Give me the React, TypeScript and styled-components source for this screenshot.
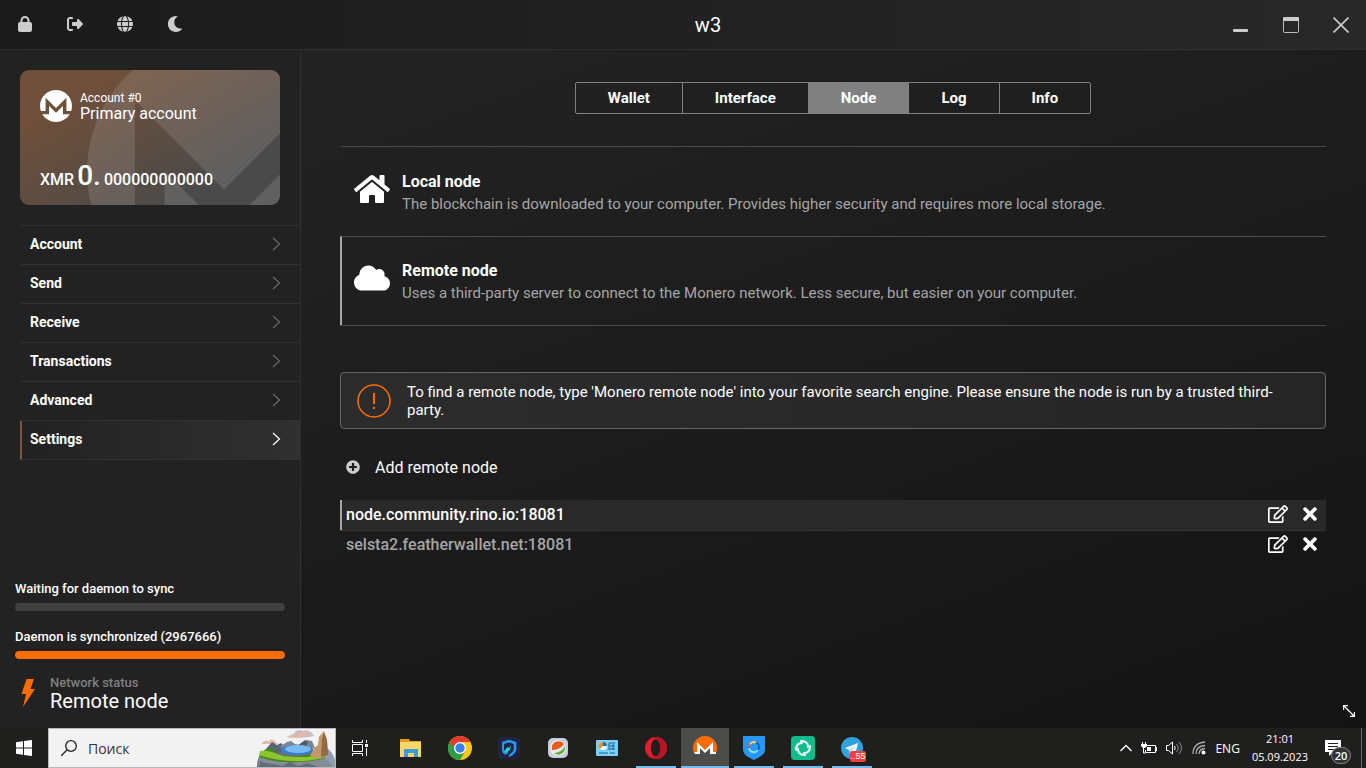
import React from 'react'
import styled, { createGlobalStyle } from 'styled-components'
import { FaHome, FaCloud, FaRegEdit, FaTimes, FaPlusCircle, FaMoon } from 'react-icons/fa'
import { FaLock, FaRightFromBracket, FaGlobe } from 'react-icons/fa6'

const GlobalStyle = createGlobalStyle`
  * {
    box-sizing: border-box;
  }
  body {
    margin: 0;
    background: #171717;
    color: #ffffff;
    font-family: Roboto, "Liberation Sans", sans-serif;
  }
  button {
    background: none;
    border: none;
    padding: 0;
    margin: 0;
    color: inherit;
    font: inherit;
    cursor: pointer;
  }
  svg {
    display: block;
    flex-shrink: 0;
  }
`

const Desktop = styled.div`
  height: 100vh;
  display: flex;
  flex-direction: column;
  overflow: hidden;
`

const TitleBar = styled.header`
  height: 50px;
  flex-shrink: 0;
  display: grid;
  grid-template-columns: 1fr auto 1fr;
  align-items: center;
  background: linear-gradient(to right, #1a1a1a, #282828);
  border-bottom: 1px solid #303030;
  color: #cccccc;
`

const TitleGroup = styled.div<{ $end?: boolean }>`
  display: flex;
  justify-content: ${(p) => (p.$end ? 'flex-end' : 'flex-start')};
  padding-bottom: ${(p) => (p.$end ? '0' : '2px')};
`

const TitleButton = styled.button`
  width: 50px;
  height: 48px;
  display: flex;
  align-items: center;
  justify-content: center;
`

const Title = styled.h1`
  margin: 0;
  font-size: 20px;
  font-weight: 400;
  color: #ffffff;
  padding-left: 50px;
`

const Window = styled.div`
  position: relative;
  flex: 1;
  min-height: 0;
  display: flex;
`

const Sidebar = styled.aside`
  width: 301px;
  flex-shrink: 0;
  display: flex;
  flex-direction: column;
  justify-content: space-between;
  background: #222222;
  border-right: 1px solid #303030;
`

const Card = styled.section`
  position: relative;
  overflow: hidden;
  height: 135px;
  margin: 20px;
  padding: 20px 20px 9px;
  border-radius: 9px;
  display: flex;
  flex-direction: column;
  justify-content: space-between;
  background: linear-gradient(150deg, #6f4f39 20%, #4a4a4a 80%);
`

const Watermark = styled.svg`
  position: absolute;
  left: 67px;
  top: -35px;
  fill: rgba(255, 255, 255, 0.12);
`

const CardHead = styled.div`
  position: relative;
  display: flex;
  gap: 8px;
`

const AccountNumber = styled.div`
  font-size: 12px;
  line-height: 16px;
`

const AccountName = styled.div`
  font-size: 16px;
  line-height: 16px;
`

const Balance = styled.div`
  position: relative;
  display: flex;
  align-items: baseline;
  gap: 3px;
  font-size: 16px;
  line-height: 32px;
  font-weight: 500;
`

const BalanceWhole = styled.span`
  font-size: 28px;
`

const Nav = styled.nav`
  margin-left: 20px;
  border-top: 1px solid #313131;
`

const NavLink = styled.a<{ $active?: boolean }>`
  height: 39px;
  display: flex;
  align-items: center;
  justify-content: space-between;
  padding: 0 19px 2px 8px;
  border-left: 2px solid ${(p) => (p.$active ? '#7a5643' : 'transparent')};
  border-bottom: 1px solid #313131;
  background: ${(p) => (p.$active ? 'linear-gradient(to right, #222222, #303030)' : 'none')};
  color: #ffffff;
  font-size: 14px;
  font-weight: 700;
  text-decoration: none;

  svg {
    stroke: ${(p) => (p.$active ? '#ffffff' : '#6a6a6a')};
  }
`

const Status = styled.div`
  padding: 0 15px 17px;
`

const SyncLabel = styled.div`
  font-size: 13px;
  line-height: 16px;
  font-weight: 500;
`

const Track = styled.div`
  height: 8px;
  margin: 6px 0 18px;
  border-radius: 4px;
  background: #404040;
  overflow: hidden;
`

const Fill = styled.div`
  height: 100%;
  border-radius: 4px;
  background: #ff6c00;
`

const Network = styled.div`
  display: flex;
  align-items: center;
  gap: 14px;
  padding-left: 6px;
  margin-top: -2px;
`

const NetworkLabel = styled.div`
  color: #808080;
  font-size: 13px;
  line-height: 16px;
  font-weight: 500;
`

const NetworkValue = styled.div`
  font-size: 20px;
  line-height: 20px;
`

const Main = styled.main`
  flex: 1;
  min-width: 0;
  padding: 32px 40px 0 39px;
  background: linear-gradient(160deg, #232323 0%, #141414 100%);
`

const Tabs = styled.div`
  width: fit-content;
  height: 32px;
  margin: 0 auto 32px;
  display: flex;
  border: 1px solid #808080;
  border-radius: 2px;
`

const Tab = styled.button<{ $active?: boolean }>`
  padding: 0 32px;
  font-size: 15px;
  font-weight: 700;
  background: ${(p) => (p.$active ? '#808080' : 'none')};

  & + & {
    border-left: 1px solid #808080;
  }
`

const NodeOption = styled.button<{ $active?: boolean }>`
  width: 100%;
  height: 90px;
  display: flex;
  align-items: center;
  gap: 12px;
  padding: 2px 0 0 12px;
  border-top: 1px solid #4a4a4a;
  border-left: 2px solid ${(p) => (p.$active ? '#a8a8a8' : 'transparent')};
  text-align: left;

  &:last-child {
    height: 89px;
  }
  svg {
    margin-bottom: 8px;
  }
`

const NodeOptions = styled.section`
  border-bottom: 1px solid #4a4a4a;
  margin-bottom: 46px;
`

const OptionTitle = styled.div`
  font-size: 16px;
  line-height: 22px;
  font-weight: 700;
`

const OptionText = styled.div`
  color: #a5a5a5;
  font-size: 15px;
  line-height: 22px;
`

const Notice = styled.div`
  display: flex;
  align-items: center;
  gap: 16px;
  padding: 10px 16px 9px;
  border: 1px solid #666666;
  border-radius: 4px;
  background: linear-gradient(to right, #2c2c2c, #252525);
  font-size: 15px;
  line-height: 18px;
`

const NoticeText = styled.p`
  margin: 0;
`

const AddNode = styled.button`
  display: flex;
  align-items: center;
  gap: 15px;
  height: 30px;
  margin: 23px 0 18px;
  padding-left: 6px;
  font-size: 16px;

  svg {
    color: #cccccc;
  }
`

const NodeList = styled.ul`
  list-style: none;
  margin: 0;
  padding: 0;
`

const NodeItem = styled.li<{ $active?: boolean }>`
  height: 30px;
  display: flex;
  align-items: center;
  justify-content: space-between;
  padding: 0 6px 2px 4px;
  border-left: 2px solid ${(p) => (p.$active ? '#a8a8a8' : 'transparent')};
  background: ${(p) => (p.$active ? '#292929' : 'none')};
  box-shadow: ${(p) => (p.$active ? '0 1px #333333' : 'none')};
  color: ${(p) => (p.$active ? '#ffffff' : '#a5a5a5')};
  font-size: 16px;
  font-weight: 500;
`

const NodeActions = styled.div`
  display: flex;
  align-items: center;
  gap: 12px;
  color: #ffffff;
`

const ResizeGrip = styled.div`
  position: absolute;
  right: 11px;
  bottom: 11px;
`

const Taskbar = styled.footer`
  height: 40px;
  flex-shrink: 0;
  display: flex;
  background: #1f201e;
  font-family: "Open Sans", "Noto Sans", sans-serif;
`

const TaskCell = styled.button<{ $open?: boolean; $active?: boolean }>`
  width: 48px;
  display: flex;
  align-items: center;
  justify-content: center;
  background: ${(p) => {
    if (p.$active) return 'linear-gradient(#76b9ed, #76b9ed) center bottom / 48px 2px no-repeat #4c4c4b'
    return p.$open ? 'linear-gradient(#76b9ed, #76b9ed) center bottom / 40px 2px no-repeat' : 'none'
  }};
`

const SearchBox = styled.label`
  width: 288px;
  display: flex;
  align-items: center;
  padding-left: 12px;
  background: #f2f2f2;
  border: 1px solid #b8b8b8;
  overflow: hidden;
`

const SearchInput = styled.input`
  flex: 1;
  min-width: 0;
  margin-left: 11px;
  padding: 0;
  border: none;
  outline: none;
  background: none;
  font-family: inherit;
  font-size: 14px;

  &::placeholder {
    color: #333333;
    opacity: 1;
  }
`

const Apps = styled.div`
  display: flex;
  gap: 1px;
  margin-left: 3px;
`

const Tray = styled.div`
  display: flex;
  align-items: center;
  margin-left: auto;
  font-size: 12px;
`

const TrayIcons = styled.div`
  display: flex;
  align-items: center;
  gap: 9px;
  margin-right: 9px;
`

const Clock = styled.time`
  margin: 0 17px 0 12px;
  font-size: 11px;
  line-height: 18px;
  text-align: center;
`

const ShowDesktop = styled.div`
  width: 5px;
  height: 40px;
  margin-left: 8px;
  border-left: 1px solid #6b6b6b;
`

const MONERO =
  'M12 0C5.365 0 0 5.373 0 12.015c0 1.335.228 2.607.618 3.81h3.577V5.729L12 13.545l7.805-7.815v10.095h3.577c.389-1.203.618-2.475.618-3.81C24 5.375 18.635 0 12 0zm-1.788 15.307l-3.417-3.421v6.351H1.758C3.87 21.689 7.678 24 12 24s8.162-2.311 10.245-5.764h-5.04v-6.351l-3.386 3.421-1.788 1.79-1.814-1.79h-.005z'

const navItems = ['Account', 'Send', 'Receive', 'Transactions', 'Advanced', 'Settings']
const tabs = ['Wallet', 'Interface', 'Node', 'Log', 'Info']
const nodes = ['node.community.rino.io:18081', 'selsta2.featherwallet.net:18081']

const Chevron = () => (
  <svg width="9" height="14" viewBox="0 0 9 14" fill="none" strokeWidth="1.2">
    <path d="M1 1l6.500 6L1 13" />
  </svg>
)

const Progress = ({ label, value }: { label: string; value: number }) => (
  <>
    <SyncLabel>{label}</SyncLabel>
    <Track role="progressbar" aria-label={label} aria-valuenow={value}>
      <Fill style={{ width: `${value}%` }} />
    </Track>
  </>
)

const Landscape = () => (
  <svg width="78" height="38" viewBox="0 0 78 38">
    <path d="M5 14c2-3 5-3 7-2 2-3 5-1 7 1l2 2H5z" fill="#e0bcae" />
    <path d="M30 8c3-1 4-3 7-3 1-4 6-5 9-3 4-2 7 0 9 2l2 3c-9 2-18 2-27 1z" fill="#c4bccb" />
    <path d="M30 8c4-3 7-1 10-3 3-1 4-3 7-2 4 0 5 2 4 4-6 2-14 2-21 1z" fill="#e0b9a8" />
    <path d="M62 38V16c7 0 14 7 16 15v7z" fill="#8f9db2" />
    <path d="M0 38c0-10 4-16 13-20h42l8 20z" fill="#64717d" />
    <path d="M9 20l6-7 5 3 4-2 6 6-9 4z" fill="#59656f" />
    <path d="M22 18l8-5 4-1 4 3 5 1 7-5 5 1 3 7-10 2-20-2z" fill="#7c8791" />
    <path d="M40 17l8-6 3 2-2 5z" fill="#505d67" />
    <ellipse cx="40" cy="21" rx="16" ry="5" fill="#347fd0" />
    <ellipse cx="41" cy="20" rx="13" ry="4" fill="#78baf0" />
    <path d="M3 25c3-2 5-5 10-6 5 2 4 6 13 8 12 1 22 0 34-3l9 5c-16 8-48 7-67 0z" fill="#3f8a20" />
    <path d="M3 22c9-1 14 2 23 5 14 2 28 1 42-1l-2 3c-18 5-44 4-64-3z" fill="#8ec52e" />
    <path d="M1 38l1-10c18 7 46 7 66 1l8 9z" fill="#858c98" />
    <path d="M2 38l1-6c8 4 14 2 22 5l8-4 8 4 10-3 10 4z" fill="#626b78" />
    <path d="M53 27l4-8 4-3 1-8 5-6 3 9 1 16c-5 2-12 3-18 0z" fill="#c3986a" />
    <path d="M64 28l1-18 2-7 3 8 1 15z" fill="#916943" />
  </svg>
)

const apps: { name: string; open?: boolean; active?: boolean; icon: React.ReactNode }[] = [
  {
    name: 'Explorer',
    icon: (
      <svg width="24" height="24" viewBox="0 0 24 24">
        <path d="M1 3h9l1 2h11v5H1z" fill="#e0a010" />
        <path d="M1 6h21v15H1z" fill="#fbd668" />
        <path d="M5 21v-8h14v8h-4v-4H9v4z" fill="#3c9ade" />
      </svg>
    ),
  },
  {
    name: 'Chrome',
    icon: (
      <svg width="24" height="24" viewBox="0 0 24 24">
        <circle cx="12" cy="12" r="12" fill="#fbc916" />
        <path d="M12 12L1.600 6A12 12 0 0 0 12 24l5.200-9z" fill="#2f9e4b" />
        <path d="M12 12H6.800L1.600 6A12 12 0 0 1 22.400 6H12z" fill="#e33b2e" />
        <circle cx="12" cy="12" r="6" fill="#ffffff" />
        <circle cx="12" cy="12" r="4.700" fill="#3b7ded" />
      </svg>
    ),
  },
  {
    name: 'Protection',
    icon: (
      <svg width="24" height="24" viewBox="0 0 24 24">
        <rect x="1" y="1" width="22" height="22" rx="4" fill="#202442" />
        <path d="M6 7l6-2 6 2v6c0 3-2 5-6 7" fill="none" stroke="#2398ff" strokeWidth="2.500" />
        <path d="M6 6v7c0 2 1 4 3 5" fill="none" stroke="#2398ff" strokeWidth="2" />
        <path d="M14 9l-1 5-2 1-1 4-1-3-3 1 3-4 1-2 2 1z" fill="#19d8e2" />
      </svg>
    ),
  },
  {
    name: 'Trading',
    icon: (
      <svg width="22" height="22" viewBox="0 0 22 22">
        <rect x="1" y="1" width="20" height="20" rx="5" fill="#c5ccdb" />
        <circle cx="11" cy="11" r="8" fill="#e9ebf0" />
        <path d="M5 13C3 4 14 2 17 7c-3 4-7 6-12 6z" fill="#e65b1c" />
        <path d="M7 16c5 0 9-3 11-7 1 7-6 11-11 7z" fill="#63a83a" />
      </svg>
    ),
  },
  {
    name: 'System monitor',
    icon: (
      <svg width="22" height="18" viewBox="0 0 22 18">
        <rect width="22" height="16" y="1" rx="1" fill="#7bd0f7" />
        <circle cx="7" cy="7" r="4" fill="#ffffff" />
        <path d="M7 7V3a4 4 0 0 0-3 7z" fill="#e8902d" />
        <path d="M7 7V3a4 4 0 0 1 4 4z" fill="#246ca8" />
        <path d="M13 4h6M13 7h6M13 10h6M13 4v7M17 5v6M3 14h9M14 14h5" stroke="#18649c" />
      </svg>
    ),
  },
  {
    name: 'Opera',
    open: true,
    icon: (
      <svg width="24" height="24" viewBox="0 0 24 24">
        <path fillRule="evenodd" d="M12 1a11 11 0 1 0 0 22 11 11 0 1 0 0-22m0 3c6 0 6 16 0 16s-6-16 0-16z" fill="#e91b2d" />
        <path d="M12 1a11 11 0 0 1 0 22c-2 0-3-1-4-2 10 2 12-16 1-19z" fill="#b81624" />
        <ellipse cx="11.500" cy="12" rx="4.500" ry="8.500" fill="#1f201e" />
      </svg>
    ),
  },
  {
    name: 'Monero',
    open: true,
    active: true,
    icon: (
      <svg width="24" height="24" viewBox="0 0 24 24">
        <path d="M12 0A12 12 0 0 0 1 17h3V6l8 8 8-8v11h3A12 12 0 0 0 12 0z" fill="#ff6c00" />
        <path d="M2 18h5v-6l5 5 5-5v6h6v-2h-3V6l-8 8-8-8v10H1z" fill="#ffffff" />
      </svg>
    ),
  },
  {
    name: 'Shield',
    open: true,
    icon: (
      <svg width="24" height="24" viewBox="0 0 24 24">
        <path d="M1 0h22v13c0 6-5 8-11 11C6 21 1 19 1 13z" fill="#2798f3" />
        <g fill="none" strokeWidth="2">
          <circle cx="12" cy="11" r="5" stroke="#175dbd" />
          <path d="M7.700 8.500A5 5 0 0 1 14 6.500" stroke="#f5d267" />
          <path d="M7 11a5 5 0 0 1 1-3" stroke="#ed665e" />
          <path d="M16 14a5 5 0 0 1-9-2" stroke="#8be2f6" />
        </g>
      </svg>
    ),
  },
  {
    name: 'Element',
    open: true,
    icon: (
      <svg width="24" height="24" viewBox="0 0 24 24">
        <rect width="24" height="24" rx="4" fill="#0dbd8b" />
        <g fill="none" stroke="#ffffff" strokeWidth="2" strokeLinecap="round">
          <path d="M10 5c4 0 7 2 7 6" />
          <path d="M19 10c0 4-2 7-6 7" />
          <path d="M14 19c-4 0-7-2-7-6" />
          <path d="M5 14c0-4 2-7 6-7" />
        </g>
      </svg>
    ),
  },
]

const TelegramIcon = styled.span`
  position: relative;
`

const TelegramBadge = styled.span`
  position: absolute;
  left: 9px;
  top: 14px;
  width: 16px;
  height: 11px;
  border-radius: 2px;
  background: #ef3e3e;
  font-size: 9px;
  line-height: 11px;
  font-family: "Liberation Sans", sans-serif;
`

const NoticeBell = styled.div`
  position: relative;
  width: 28px;
  height: 16px;
`

const NoticeCount = styled.span`
  position: absolute;
  left: 6px;
  top: 7px;
  width: 20px;
  height: 17px;
  border: 1px solid #888888;
  border-radius: 9px;
  background: #333333;
  font-size: 11px;
  font-weight: 600;
  line-height: 15px;
  text-align: center;
`

const App = () => {
  return (
    <Desktop>
      <GlobalStyle />
      <TitleBar>
        <TitleGroup>
          <TitleButton aria-label="Lock"><FaLock size={16} /></TitleButton>
          <TitleButton aria-label="Close wallet"><FaRightFromBracket size={16} /></TitleButton>
          <TitleButton aria-label="Language"><FaGlobe size={16} /></TitleButton>
          <TitleButton aria-label="Theme"><FaMoon size={16} /></TitleButton>
        </TitleGroup>
        <Title>w3</Title>
        <TitleGroup $end>
          <TitleButton aria-label="Minimize">
            <svg width="16" height="16"><rect x="0" y="12" width="15" height="3" rx="1" fill="#cccccc" /></svg>
          </TitleButton>
          <TitleButton aria-label="Maximize">
            <svg width="16" height="16">
              <rect x="0.500" y="0.500" width="15" height="15" rx="1" fill="none" stroke="#bbbbbb" />
              <rect width="16" height="4" rx="1" fill="#cccccc" />
            </svg>
          </TitleButton>
          <TitleButton aria-label="Close">
            <svg width="16" height="16"><path d="M0.500 0.500l15 15M15.500 0.500l-15 15" stroke="#cccccc" strokeWidth="1.600" /></svg>
          </TitleButton>
        </TitleGroup>
      </TitleBar>

      <Window>
        <Sidebar>
          <div>
            <Card>
              <Watermark width="274" height="274" viewBox="0 0 24 24"><path d={MONERO} /></Watermark>
              <CardHead>
                <svg width="32" height="32" viewBox="0 0 24 24" fill="#ffffff"><path d={MONERO} /></svg>
                <div>
                  <AccountNumber>Account #0</AccountNumber>
                  <AccountName>Primary account</AccountName>
                </div>
              </CardHead>
              <Balance>
                <span>XMR</span>
                <BalanceWhole>0.</BalanceWhole>
                <span>000000000000</span>
              </Balance>
            </Card>
            <Nav>
              {navItems.map((item) => (
                <NavLink key={item} href={`#${item.toLowerCase()}`} $active={item === 'Settings'}>
                  {item}
                  <Chevron />
                </NavLink>
              ))}
            </Nav>
          </div>
          <Status>
            <Progress label="Waiting for daemon to sync" value={0} />
            <Progress label="Daemon is synchronized (2967666)" value={100} />
            <Network>
              <svg width="15" height="28" viewBox="0 0 15 28" fill="#ff6c00">
                <path d="M5.500 0H13L9.500 10H14L2 28l3-13H0.500z" />
              </svg>
              <div>
                <NetworkLabel>Network status</NetworkLabel>
                <NetworkValue>Remote node</NetworkValue>
              </div>
            </Network>
          </Status>
        </Sidebar>

        <Main>
          <Tabs role="tablist">
            {tabs.map((tab) => (
              <Tab key={tab} role="tab" aria-selected={tab === 'Node'} $active={tab === 'Node'}>{tab}</Tab>
            ))}
          </Tabs>
          <NodeOptions>
            <NodeOption>
              <FaHome size={36} />
              <div>
                <OptionTitle>Local node</OptionTitle>
                <OptionText>The blockchain is downloaded to your computer. Provides higher security and requires more local storage.</OptionText>
              </div>
            </NodeOption>
            <NodeOption $active>
              <FaCloud size={36} />
              <div>
                <OptionTitle>Remote node</OptionTitle>
                <OptionText>Uses a third-party server to connect to the Monero network. Less secure, but easier on your computer.</OptionText>
              </div>
            </NodeOption>
          </NodeOptions>
          <Notice>
            <svg width="34" height="34" viewBox="0 0 34 34" fill="none" stroke="#ff6c00">
              <circle cx="17" cy="17" r="16" strokeWidth="1.500" />
              <path d="M17 9v11M17 23v2" strokeWidth="2" />
            </svg>
            <NoticeText>
              To find a remote node, type 'Monero remote node' into your favorite search engine. Please ensure the node is run by a trusted third-party.
            </NoticeText>
          </Notice>
          <AddNode>
            <FaPlusCircle size={14} />
            Add remote node
          </AddNode>
          <NodeList>
            {nodes.map((node, i) => (
              <NodeItem key={node} $active={i === 0}>
                {node}
                <NodeActions>
                  <button aria-label="Edit node"><FaRegEdit size={20} /></button>
                  <button aria-label="Remove node"><FaTimes size={20} /></button>
                </NodeActions>
              </NodeItem>
            ))}
          </NodeList>
        </Main>
        <ResizeGrip>
          <svg width="12" height="12" viewBox="0 0 12 12" fill="none" stroke="#ffffff" strokeWidth="1.300">
            <path d="M1 1l10 10M0.500 5V0.500H5M7 11.500h4.500V7" />
          </svg>
        </ResizeGrip>
      </Window>

      <Taskbar>
        <TaskCell aria-label="Start">
          <svg width="16" height="16" fill="#ffffff">
            <path d="M0 2.300L7 1.300V7.500H0zM8 1.100L16 0v7.500H8zM0 8.500h7v6.200l-7-1zM8 8.500h8V16l-8-1.100z" />
          </svg>
        </TaskCell>
        <SearchBox>
          <svg width="16" height="16" fill="none" stroke="#222222" strokeWidth="1.300">
            <circle cx="10" cy="6" r="5.300" />
            <path d="M6 10l-6 6" />
          </svg>
          <SearchInput type="text" placeholder="Поиск" aria-label="Поиск" />
          <Landscape />
        </SearchBox>
        <TaskCell aria-label="Task view">
          <svg width="16" height="16" fill="none" stroke="#ffffff">
            <path d="M0.500 0v2.500h10V0M0.500 4.500h10v7H0.500zM0.500 16v-2.500h10V16M14.500 0v3M14.500 8v8" />
            <path d="M13 4h3v3h-3z" fill="#ffffff" stroke="none" />
          </svg>
        </TaskCell>
        <Apps>
          {apps.map((app) => (
            <TaskCell key={app.name} aria-label={app.name} $open={app.open} $active={app.active}>
              {app.icon}
            </TaskCell>
          ))}
          <TaskCell aria-label="Telegram" $open>
            <TelegramIcon>
              <svg width="22" height="22" viewBox="0 0 22 22">
                <circle cx="11" cy="11" r="11" fill="#2da2dc" />
                <path d="M4 11l13-5-3 12-4-4-1 3-1-4z" fill="#ffffff" />
                <path d="M8 13l7-5-5 6-1 3z" fill="#b5d5e8" />
              </svg>
              <TelegramBadge>..55</TelegramBadge>
            </TelegramIcon>
          </TaskCell>
        </Apps>
        <Tray>
          <TrayIcons>
            <svg width="12" height="8" fill="none" stroke="#ffffff" strokeWidth="1.300"><path d="M0.500 7L6 1.500 11.500 7" /></svg>
            <svg width="16" height="12" fill="none" stroke="#ffffff">
              <path d="M6 3.500h8.500v7H4.500V8M15.500 5v4M2.500 5v6h2M1.500 0v2M4.500 0v2" />
              <path d="M0 2h6v2L4 6H2L0 4zM6 5h4v4H6z" fill="#ffffff" stroke="none" />
            </svg>
            <svg width="17" height="14" fill="none" stroke="#ffffff">
              <path d="M0.500 4.500h2l4-3.500v12l-4-3.500h-2z" />
              <path d="M8.500 5q1.500 2 0 4" />
              <path d="M10.500 3q3.500 4 0 8M13 1q5 6 0 12" stroke="#888888" />
            </svg>
            <svg width="14" height="14" fill="none" stroke="#aaaaaa" strokeWidth="1.300">
              <path d="M1 13Q1 2 13 1M4 13Q4 5 13 4.500M7 13Q7 8 13 7.500" />
              <circle cx="11.500" cy="11.500" r="2" fill="#ffffff" stroke="none" />
            </svg>
          </TrayIcons>
          <span>ENG</span>
          <Clock dateTime="2023-09-05T21:01">
            21:01<br />05.09.2023
          </Clock>
          <NoticeBell>
            <svg width="16" height="16">
              <path d="M0 0h16v12H8l-4 4v-4H0z" fill="#ffffff" />
              <path d="M3 3.500h10M3 6.500h10M3 9.500h6" stroke="#222222" />
            </svg>
            <NoticeCount>20</NoticeCount>
          </NoticeBell>
          <ShowDesktop />
        </Tray>
      </Taskbar>
    </Desktop>
  )
}

export default App
